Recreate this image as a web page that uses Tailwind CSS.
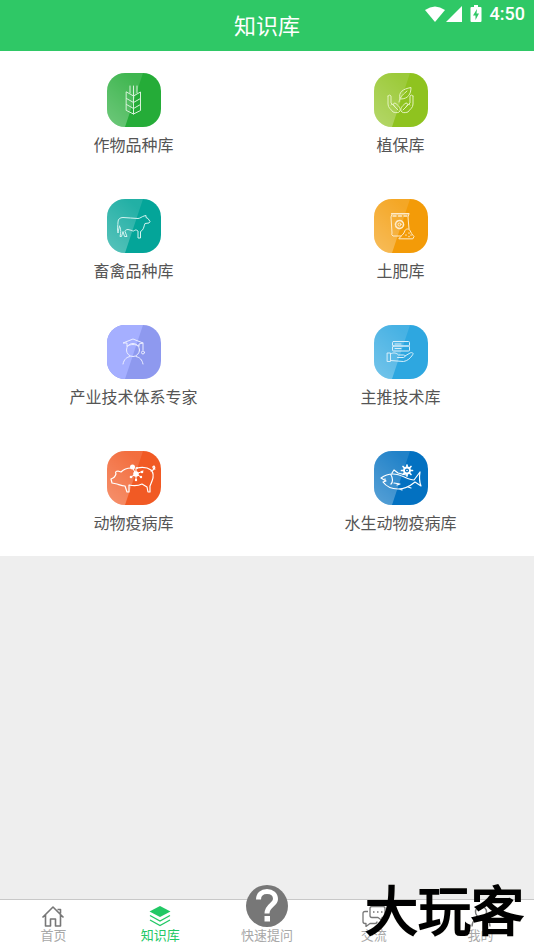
<!DOCTYPE html>
<html lang="zh-CN">
<head>
    <meta charset="UTF-8">
    <meta name="viewport" content="width=device-width, initial-scale=1.0">
    <title>知识库</title>
    <script src="https://cdn.jsdelivr.net/npm/@tailwindcss/browser@4"></script>
</head>
<body class="min-h-screen flex flex-col bg-[#eeeeee] font-['Noto_Sans_CJK_SC',sans-serif] text-[#555555]">
    <header class="relative bg-[#2fc866] text-white h-[51px] flex items-start justify-center pt-2">
        <h1 class="text-[22px] leading-8">知识库</h1>
        <!-- Barre d'état -->
        <div class="absolute top-1 right-[9px] flex items-center h-5">
            <svg class="w-5 h-4" viewBox="0 0 20 16" fill="#fff"><path d="M0 4Q10-3 20 4L10 16Z"/></svg>
            <svg class="w-4 h-4 ml-px" viewBox="0 0 16 16" fill="#fff"><path d="M16 0V16H0Z"/></svg>
            <svg class="w-3 h-[18px] ml-2" viewBox="0 0 12 18"><path fill="#fff" d="M4 0h4v2h2.500q1 0 1 1v13q0 1-1 1h-9q-1 0-1-1V3q0-1 1-1H4Z"/><path fill="#2fc866" d="M7 4L3 10.500h2.500V15L9 8.500H6.500Z"/></svg>
            <span class="ml-2 font-['Roboto',sans-serif] font-medium text-lg leading-5">4:50</span>
        </div>
    </header>

    <!-- Dégradé commun aux tuiles -->
    <svg class="absolute w-0 h-0" aria-hidden="true">
        <defs>
            <linearGradient id="shine" x1="0" y1="1" x2="0.6" y2="0">
                <stop offset="0" stop-color="#fff" stop-opacity="0.34"/>
                <stop offset="1" stop-color="#fff" stop-opacity="0.12"/>
            </linearGradient>
        </defs>
    </svg>

    <main class="flex-1">
        <div class="grid grid-cols-2 bg-white pb-px">
            <a href="#" class="flex flex-col items-center gap-1 pt-[22px] pb-5">
                <svg class="w-[54px] h-[54px] rounded-[18px] bg-[#25ac38]" viewBox="0 0 54 54" fill="none" stroke="#d8f2da" stroke-width="1" stroke-linejoin="round" stroke-linecap="round">
                    <path d="M0 0H36L18 54H0Z" fill="url(#shine)" stroke="none"/>
                    <path d="M26.500 13v28M23 13v7M30 13v7M19.500 19l7 4 7-4v18.500l-7 3.500-7-3.500ZM19.500 25.500l7 4 7-4M19.500 31.500l7 4 7-4"/>
                </svg>
                <span class="text-base leading-[26px]">作物品种库</span>
            </a>
            <a href="#" class="flex flex-col items-center gap-1 pt-[22px] pb-5">
                <svg class="w-[54px] h-[54px] rounded-[18px] bg-[#8fc31f]" viewBox="0 0 54 54" fill="none" stroke="#e3f2bd" stroke-width="1" stroke-linejoin="round" stroke-linecap="round">
                    <path d="M0 0H36L18 54H0Z" fill="url(#shine)" stroke="none"/>
                    <path d="M25 29C26 23 30 21 33 18M26 26C24 19 29 16 37 14.500C37 21 34 26 27 26"/>
                    <path d="M14 23q2-2 3 0v7l4 4M21 34c-1-2-3-4-4-2M14 23v8c0 4 3 5 5 8 3 1 6 1 7-1 1-3-2-6-5-8-2 0-2 2-1 3l4 4M39 23q-2-2-3 0v7l-4 4M32 34c1-2 3-4 4-2M39 23v8c0 4-3 5-5 8-3 1-6 1-7-1-1-3 2-6 5-8 2 0 2 2 1 3l-4 4"/>
                </svg>
                <span class="text-base leading-[26px]">植保库</span>
            </a>
            <a href="#" class="flex flex-col items-center gap-1 pt-[22px] pb-5">
                <svg class="w-[54px] h-[54px] rounded-[18px] bg-[#04a599]" viewBox="0 0 54 54" fill="none" stroke="#d4f3f0" stroke-width="1" stroke-linejoin="round" stroke-linecap="round">
                    <path d="M0 0H36L18 54H0Z" fill="url(#shine)" stroke="none"/>
                    <path d="M12.500 27c-1 4-1 5-1.500 7-1-4 0-8 0-11 0-3 2-4.500 5-4.500 5 0 10 1 15 1 2 0 4-2 6-2.500l2-.5v2l2 1 2 3-1 1.500-4 .5c-1 2-1 5-3 7l-1.500 1v6.500h-2.500v-7c-1-1-2-1-3-1-1 1-2 1.500-3 .5l-4-1c-2 0-3 1-3 2l2 5h-2.500l-1.500-5-1.500 5h-1.500c1-4 1-6 0-9.500"/>
                </svg>
                <span class="text-base leading-[26px]">畜禽品种库</span>
            </a>
            <a href="#" class="flex flex-col items-center gap-1 pt-[22px] pb-5">
                <svg class="w-[54px] h-[54px] rounded-[18px] bg-[#f39b08]" viewBox="0 0 54 54" fill="none" stroke="#fdebcb" stroke-width="1" stroke-linejoin="round" stroke-linecap="round">
                    <path d="M0 0H36L18 54H0Z" fill="url(#shine)" stroke="none"/>
                    <path d="M27 37H19q-2-1-1-3l-1-16 1-3h17l-1 3 1 12M17.500 14.500H35"/>
                    <path d="M19 17h15" stroke-width="1.500" stroke-dasharray="3 2.500"/>
                    <circle cx="25.500" cy="25.500" r="4" stroke-width="1.600" stroke-dasharray="2 1"/>
                    <circle cx="25.500" cy="25.500" r="1.500"/>
                    <path d="M25 39.500c2-3 5-4 6-8 1-2 4-2 5 0 1 2 2 4 4 6l-1 2Z"/>
                    <path d="M32 36v.2M35 34v.2M35 37.500v.2M37 36v.2" stroke-width="1.300"/>
                </svg>
                <span class="text-base leading-[26px]">土肥库</span>
            </a>
            <a href="#" class="flex flex-col items-center gap-1 pt-[22px] pb-5">
                <svg class="w-[54px] h-[54px] rounded-[18px] bg-[#8e99ef]" viewBox="0 0 54 54" fill="none" stroke="#eceeff" stroke-width="1" stroke-linejoin="round" stroke-linecap="round">
                    <path d="M0 0H36L18 54H0Z" fill="#a5afff" stroke="none"/>
                    <path d="M20 21v-3l-4 0 10-4 10 4-4 1v2M20 21c4-2 8-2 12 0M36 18v7"/>
                    <circle cx="26" cy="25" r="6.500"/>
                    <circle cx="36" cy="27.500" r="1.500"/>
                    <path d="M16 39c1-5 4-7 7-7.500M29 31.500c4 1 6 3 7 7.500"/>
                </svg>
                <span class="text-base leading-[26px]">产业技术体系专家</span>
            </a>
            <a href="#" class="flex flex-col items-center gap-1 pt-[22px] pb-5">
                <svg class="w-[54px] h-[54px] rounded-[18px] bg-[#2ea7e0]" viewBox="0 0 54 54" fill="none" stroke="#d9effa" stroke-width="1" stroke-linejoin="round" stroke-linecap="round">
                    <path d="M0 0H36L18 54H0Z" fill="url(#shine)" stroke="none"/>
                    <rect x="18.500" y="16.500" width="17" height="4.500" rx="1"/>
                    <rect x="18.500" y="21" width="17" height="5" rx="1"/>
                    <path d="M21 19h6M21 23.500h6"/>
                    <path d="M13.500 28h3v8.500h-3ZM16.500 29c3-2 6-1 8 1h5c2 0 2 2 0 2.500h-6M31 31l5-3c2-1 4 0 2.500 2-2 3-5 6-9 6.500l-13-1"/>
                </svg>
                <span class="text-base leading-[26px]">主推技术库</span>
            </a>
            <a href="#" class="flex flex-col items-center gap-1 pt-[22px] pb-5">
                <svg class="w-[54px] h-[54px] rounded-[18px] bg-[#f15a24]" viewBox="0 0 54 54" fill="none" stroke="#fff" stroke-width="1.200" stroke-linejoin="round" stroke-linecap="round">
                    <path d="M0 0H36L18 54H0Z" fill="url(#shine)" stroke="none"/>
                    <path d="M24 17c-4 0-7 1-10 4l-3-1c-2 0-3 1-2 3-1 2-1 3-3 4l-2 1 1 4 5 1c3 1 5 2 8 2l2 6h2v-7c5 1 9 1 13-1l5 3 1 5h2v-6l2-5c2-5 2-8-1-11-4-3-9-3-14-2M44 20c3-1 5-3 3-5-2 0-1 3 1 3"/>
                    <path d="M29 23l-4-7M29 23l7-3M29 23l-5 3M29 23l5 3M29 23v6M29 23v-6" stroke-width="1"/>
                    <g fill="#fff" stroke="none"><circle cx="29" cy="23" r="2.800"/><circle cx="25.500" cy="16" r="2.500"/><circle cx="35" cy="21" r="1.300"/><circle cx="24" cy="26" r="1.300"/><circle cx="34" cy="26" r="1.200"/><circle cx="29" cy="29" r="1.200"/><circle cx="30" cy="17" r="1"/></g>
                </svg>
                <span class="text-base leading-[26px]">动物疫病库</span>
            </a>
            <a href="#" class="flex flex-col items-center gap-1 pt-[22px] pb-5">
                <svg class="w-[54px] h-[54px] rounded-[18px] bg-[#0371c1]" viewBox="0 0 54 54" fill="none" stroke="#fff" stroke-width="1.200" stroke-linejoin="round" stroke-linecap="round">
                    <path d="M0 0H36L18 54H0Z" fill="url(#shine)" stroke="none"/>
                    <path d="M7 27c4-3 8-4 12-4 9 0 14 6 21 6l6-8c-1 6-1 9 1 14l-6-4c-6 5-11 7-17 7-7 0-12-3-15-7l3-1ZM17 24c2 3 2 7 0 9M18 22l2-3 4 3 8 2M20 32l6 1-3 1M25 38l3 1M34 36l3 1"/>
                    <path d="M11 28v.2" stroke-width="1.400"/>
                    <circle cx="33" cy="19.500" r="3" stroke-width="1.800"/>
                    <path d="M33 14v2M33 23v2M27.500 19.500h2M36.500 19.500h2M29 15.500l1.500 1.500M35.500 22l1.500 1.500M29 23.500l1.500-1.500M35.500 17l1.500-1.500" stroke-width="1.700"/>
                    <circle cx="33" cy="19.500" r=".8" fill="#fff" stroke="none"/>
                </svg>
                <span class="text-base leading-[26px]">水生动物疫病库</span>
            </a>
        </div>
    </main>

    <!-- Barre de navigation -->
    <nav class="relative grid grid-cols-5 h-[51px] bg-white border-t border-[#c8c8c8] text-[13px] leading-4 text-[#a8a8a8]">
        <a href="#" class="flex flex-col items-center pt-[5px]">
            <svg class="w-6 h-[22px]" viewBox="0 0 24 22" fill="none" stroke="#777" stroke-width="1.600" stroke-linejoin="round">
                <path d="M1.500 12.500L12 2l10.500 10.500M4.500 10v11h5V14h5v7h5V10M16.500 4.500h3v4"/>
            </svg>
            <span>首页</span>
        </a>
        <a href="#" class="flex flex-col items-center pt-[5px] text-[#22c865]">
            <svg class="w-6 h-[22px]" viewBox="0 0 24 22" fill="none" stroke="#22c865" stroke-width="1.400">
                <path d="M12 1L22.500 6.500 12 12 1.500 6.500Z" fill="#22c865" stroke="none"/>
                <path d="M2 10.500l10 5.500 10-5.500M2 15l10 5.500L22 15"/>
            </svg>
            <span>知识库</span>
        </a>
        <a href="#" class="flex flex-col items-center -mt-4">
            <svg class="w-[42px] h-[43px] shrink-0" viewBox="0 0 42 43">
                <circle cx="21" cy="22" r="21" fill="#777"/>
                <path d="M12.500 15.500c0-5 3.500-8 8.500-8s8.500 3 8.500 7.500c0 6-8.500 6-8.500 14.500" fill="none" stroke="#fff" stroke-width="5"/>
                <path d="M18.500 32h5.500v5.500h-5.500Z" fill="#fff"/>
            </svg>
            <span>快速提问</span>
        </a>
        <a href="#" class="flex flex-col items-center pt-[5px]">
            <svg class="w-6 h-[22px]" viewBox="0 0 24 22" fill="none" stroke="#777" stroke-width="1.300" stroke-linejoin="round">
                <path d="M10 1.500h11q2 0 2 2v7q0 2-2 2h-1v3l-4-3h-6q-2 0-2-2v-7q0-2 2-2ZM6 6.500H3q-2 0-2 2v8q0 2 2 2h1v3l4-3h5q2 0 2-2"/>
                <path d="M11 7h1.500M15 7h1.500M19 7h1.500"/>
            </svg>
            <span>交流</span>
        </a>
        <a href="#" class="flex flex-col items-center pt-[5px]">
            <svg class="w-6 h-[22px]" viewBox="0 0 24 22" fill="none" stroke="#777" stroke-width="1.400">
                <circle cx="12" cy="7" r="5.500"/><path d="M3 21.500c0-12 18-12 18 0"/>
            </svg>
            <span>我的</span>
        </a>
        <!-- Filigrane -->
        <div class="absolute right-[10px] bottom-3 text-[53px] leading-[60px] text-black pointer-events-none [-webkit-text-stroke:2px_#000] [text-shadow:0_0_2px_#d8d2b0]">大玩客</div>
    </nav>
</body>
</html>
